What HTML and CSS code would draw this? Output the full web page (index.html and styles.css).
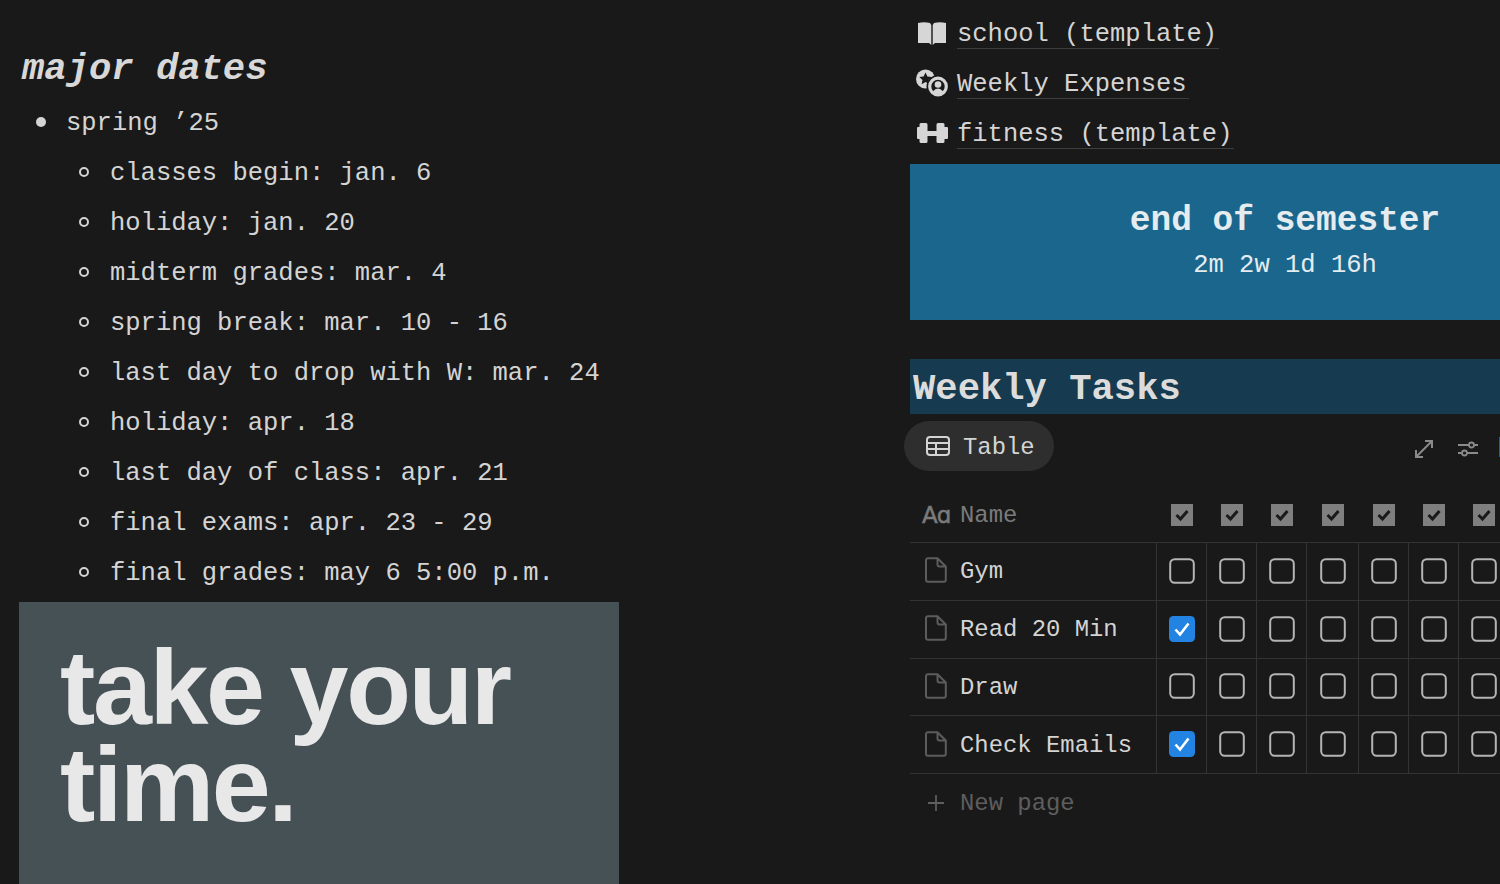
FILE: index.html
```html
<!DOCTYPE html>
<html lang="en">
<head>
<meta charset="utf-8">
<title>Dashboard</title>
<link rel="stylesheet" href="styles.css">
</head>
<body>
<svg width="0" height="0" class="defs">
  <symbol id="doc" viewBox="0 0 22 26"><path d="M3 1.200h9.500L20.800 9.500V22.800a2 2 0 0 1-2 2H3a2 2 0 0 1-2-2V3.200a2 2 0 0 1 2-2Z M12.500 1.200V7.500a2 2 0 0 0 2 2h6.300" fill="none" stroke="currentColor" stroke-width="2"/></symbol>
  <symbol id="box" viewBox="0 0 26 26"><rect x="1.200" y="1.200" width="23.600" height="23.600" rx="4.500" fill="none" stroke="currentColor" stroke-width="2"/></symbol>
  <symbol id="on" viewBox="0 0 26 26"><rect width="26" height="26" rx="4.500" fill="#2383e2"/><path d="M6.500 13.500l4.500 5 8.500-11" fill="none" stroke="#fff" stroke-width="2.600"/></symbol>
  <symbol id="hd" viewBox="0 0 22 22"><rect width="22" height="22" fill="#7f7f7f"/><path d="M5.500 11l4 4 7-8" fill="none" stroke="#1a1a1a" stroke-width="3"/></symbol>
</svg>
<main class="page">
  <section class="left">
    <h2 class="major">major dates</h2>
    <ul class="l1">
      <li>spring ’25
        <ul class="l2">
          <li>classes begin: jan. 6</li>
          <li>holiday: jan. 20</li>
          <li>midterm grades: mar. 4</li>
          <li>spring break: mar. 10 - 16</li>
          <li>last day to drop with W: mar. 24</li>
          <li>holiday: apr. 18</li>
          <li>last day of class: apr. 21</li>
          <li>final exams: apr. 23 - 29</li>
          <li>final grades: may 6 5:00 p.m.</li>
        </ul>
      </li>
    </ul>
    <div class="poster">take your time.</div>
  </section>
  <section class="right">
    <div class="links">
      <div class="link">
        <svg class="ico" viewBox="0 0 32 28"><path fill="#d6d6d6" d="M2 4Q8 2.500 14 4L15.300 6V26L13 24H2ZM30 4Q24 2.500 18 4L16.700 6V26L19 24H30Z"/></svg>
        <span class="ltext">school (template)</span>
      </div>
      <div class="link">
        <svg class="ico" viewBox="0 0 32 28"><circle cx="9.500" cy="10" r="9.500" fill="#d6d6d6"/><path fill="#191919" d="M9.500 3.500l1.900 4 4.300.5-3.200 3 .9 4.300-3.900-2.200-3.900 2.200.9-4.300-3.200-3 4.300-.5Z"/><circle cx="22" cy="17.500" r="11.500" fill="#191919"/><circle cx="22" cy="17.500" r="8.300" fill="none" stroke="#d6d6d6" stroke-width="3.200"/><circle cx="22" cy="15.500" r="3.300" fill="#d6d6d6"/><path fill="#d6d6d6" d="M16.800 22.500q5.200-6 10.400 0l-2 2.200h-6.400Z"/></svg>
        <span class="ltext">Weekly Expenses</span>
      </div>
      <div class="link">
        <svg class="ico" viewBox="0 0 32 28"><path fill="#d6d6d6" d="M5 4h5a1.500 1.500 0 0 1 1.500 1.500V12h9V5.500A1.500 1.500 0 0 1 22 4h5a1.500 1.500 0 0 1 1.500 1.500V8H31a1 1 0 0 1 1 1v10a1 1 0 0 1-1 1h-2.500v2.500A1.500 1.500 0 0 1 27 24h-5a1.500 1.500 0 0 1-1.500-1.500V17h-9v5.500A1.500 1.500 0 0 1 10 24H5a1.500 1.500 0 0 1-1.500-1.500V20H2a1 1 0 0 1-1-1V9a1 1 0 0 1 1-1h1.500V5.500A1.500 1.500 0 0 1 5 4Z"/></svg>
        <span class="ltext wide">fitness (template)</span>
      </div>
    </div>
    <div class="banner">
      <div class="bt">end of semester</div>
      <div class="bs">2m 2w 1d 16h</div>
    </div>
    <h2 class="weekly">Weekly Tasks</h2>
    <div class="toolbar">
      <div class="tab">
        <svg class="tabico" viewBox="0 0 24 20"><rect x="1" y="1" width="22" height="18" rx="3" fill="none" stroke="currentColor" stroke-width="2"/><path d="M1 7h22M1 13h22M10 7v12" stroke="currentColor" stroke-width="2"/></svg>
        <span>Table</span>
      </div>
      <div class="tools">
        <svg class="tool" viewBox="0 0 20 20"><path d="M2 18 18 2M11 2h7v7M2 11v7h7" fill="none" stroke="#8a8a8a" stroke-width="2"/></svg>
        <svg class="tool" viewBox="0 0 20 20"><path d="M0 6h11M16 6h4M0 14h4M9 14h11" fill="none" stroke="#8a8a8a" stroke-width="1.800"/><circle cx="13.500" cy="6" r="2.500" fill="none" stroke="#8a8a8a" stroke-width="1.800"/><circle cx="6.500" cy="14" r="2.500" fill="none" stroke="#8a8a8a" stroke-width="1.800"/></svg>
      </div>
      <div class="sliver"></div>
    </div>
    <div class="table">
      <div class="row head">
        <div class="name"><span class="aa">Aɑ</span><span>Name</span></div>
        <div class="c"><svg class="h"><use href="#hd"/></svg></div>
        <div class="c"><svg class="h"><use href="#hd"/></svg></div>
        <div class="c"><svg class="h"><use href="#hd"/></svg></div>
        <div class="c"><svg class="h"><use href="#hd"/></svg></div>
        <div class="c"><svg class="h"><use href="#hd"/></svg></div>
        <div class="c"><svg class="h"><use href="#hd"/></svg></div>
        <div class="c"><svg class="h"><use href="#hd"/></svg></div>
      </div>
      <div class="row">
        <div class="name"><svg class="doc"><use href="#doc"/></svg><span>Gym</span></div>
        <div class="c"><svg class="b"><use href="#box"/></svg></div>
        <div class="c"><svg class="b"><use href="#box"/></svg></div>
        <div class="c"><svg class="b"><use href="#box"/></svg></div>
        <div class="c"><svg class="b"><use href="#box"/></svg></div>
        <div class="c"><svg class="b"><use href="#box"/></svg></div>
        <div class="c"><svg class="b"><use href="#box"/></svg></div>
        <div class="c"><svg class="b"><use href="#box"/></svg></div>
      </div>
      <div class="row">
        <div class="name"><svg class="doc"><use href="#doc"/></svg><span>Read 20 Min</span></div>
        <div class="c"><svg class="b"><use href="#on"/></svg></div>
        <div class="c"><svg class="b"><use href="#box"/></svg></div>
        <div class="c"><svg class="b"><use href="#box"/></svg></div>
        <div class="c"><svg class="b"><use href="#box"/></svg></div>
        <div class="c"><svg class="b"><use href="#box"/></svg></div>
        <div class="c"><svg class="b"><use href="#box"/></svg></div>
        <div class="c"><svg class="b"><use href="#box"/></svg></div>
      </div>
      <div class="row">
        <div class="name"><svg class="doc"><use href="#doc"/></svg><span>Draw</span></div>
        <div class="c"><svg class="b"><use href="#box"/></svg></div>
        <div class="c"><svg class="b"><use href="#box"/></svg></div>
        <div class="c"><svg class="b"><use href="#box"/></svg></div>
        <div class="c"><svg class="b"><use href="#box"/></svg></div>
        <div class="c"><svg class="b"><use href="#box"/></svg></div>
        <div class="c"><svg class="b"><use href="#box"/></svg></div>
        <div class="c"><svg class="b"><use href="#box"/></svg></div>
      </div>
      <div class="row">
        <div class="name"><svg class="doc"><use href="#doc"/></svg><span>Check Emails</span></div>
        <div class="c"><svg class="b"><use href="#on"/></svg></div>
        <div class="c"><svg class="b"><use href="#box"/></svg></div>
        <div class="c"><svg class="b"><use href="#box"/></svg></div>
        <div class="c"><svg class="b"><use href="#box"/></svg></div>
        <div class="c"><svg class="b"><use href="#box"/></svg></div>
        <div class="c"><svg class="b"><use href="#box"/></svg></div>
        <div class="c"><svg class="b"><use href="#box"/></svg></div>
      </div>
    </div>
    <div class="newpage">
      <svg class="plus" viewBox="0 0 18 18"><path d="M9 0v18M0 9h18" stroke="currentColor" stroke-width="2"/></svg>
      <span>New page</span>
    </div>
  </section>
</main>
</body>
</html>
```
FILE: styles.css
```css
*, *::before, *::after { box-sizing: border-box; }
html, body { margin: 0; height: 884px; overflow: hidden; background: #191919; }
body { font-family: "Liberation Mono", "DejaVu Sans Mono", monospace; color: #d4d4d4; font-size: 25.5px; }
.defs { display: block; height: 0; }
.page { display: flex; width: 1500px; height: 884px; overflow: hidden; }

.left { width: 910px; flex: none; padding: 44px 0 0 19px; }
.major { margin: 0 0 0 3px; font-size: 37.200px; line-height: 50px; font-weight: 700; font-style: italic; color: #d8d8d8; }
.l1, .l2 { list-style: none; margin: 0; padding: 0; }
.l1 { margin-top: 5px; }
.l1 > li, .l2 > li { line-height: 50px; height: 50px; position: relative; white-space: nowrap; }
.l1 > li { padding-left: 47px; height: auto; }
.l2 > li { padding-left: 44px; }
.l1 > li::before { content: ""; position: absolute; left: 17px; top: 18px; width: 10px; height: 10px; border-radius: 50%; background: #d4d4d4; }
.l2 > li::before { content: ""; position: absolute; left: 13px; top: 18px; width: 10px; height: 10px; border-radius: 50%; border: 2px solid #d4d4d4; }
.poster { margin-top: 3px; width: 600px; height: 300px; background: #465156; color: #e8e8e8; padding: 37px 60px 0 41px; font-family: "Liberation Sans", Arial, sans-serif; font-weight: 700; font-size: 106px; line-height: 97px; letter-spacing: -2.400px; }

.right { flex: 1; min-width: 0; }
.links { display: flex; flex-direction: column; padding-top: 8px; }
.link { height: 50px; display: flex; align-items: flex-start; }
.ico { width: 32px; height: 28px; margin: 11px 9px 0 6px; flex: none; }
.ltext { height: 41px; line-height: 54px; border-bottom: 1px solid #3d3d3d; padding-right: 2px; color: #d4d4d4; }
.banner { height: 156px; margin-top: 6px; width: 750px; background: #1b668c; display: flex; flex-direction: column; align-items: center; padding-top: 34px; color: #e4ecf0; }
.bt { font-size: 34.500px; font-weight: 700; line-height: 46px; }
.bs { line-height: 44px; }
.weekly { margin: 39px 0 0; height: 55px; background: #163a4f; padding-left: 3px; font-size: 37.200px; line-height: 60px; font-weight: 700; color: #dcdcdc; }
.toolbar { height: 73px; display: flex; position: relative; padding-top: 7px; font-size: 23.900px; }
.tab { width: 150px; height: 50px; margin-left: -6px; border-radius: 25px; background: #2e2e2e; display: flex; align-items: center; padding: 3px 0 0 22px; color: #d4d4d4; }
.tabico { width: 24px; height: 20px; margin: -3px 13px 0 0; }
.tools { margin-left: auto; display: flex; gap: 24px; padding: 18px 22px 0 0; }
.tool { width: 20px; height: 20px; }
.sliver { position: absolute; right: 0; top: 23px; width: 1px; height: 20px; background: #1b668c; }
.table { border-bottom: 1px solid #333; font-size: 23.900px; }
.row { display: grid; grid-template-columns: 246px 50px 50px 50px 52px 50px 50px 50px; width: 598px; height: 57.750px; border-top: 1px solid #333; }
.row.head { height: 55px; border-top: 0; }
.name { display: flex; align-items: center; padding: 1px 0 0 15px; color: #d4d4d4; }
.head .name { color: #7b7b7b; padding-left: 12px; }
.aa { font-family: "DejaVu Sans", sans-serif; font-size: 23px; width: 38px; letter-spacing: -1px; -webkit-text-stroke: 0.5px #7b7b7b; }
.doc { width: 22px; height: 26px; margin: -3px 13px 0 0; color: #5c5c5c; flex: none; }
.c { display: flex; align-items: center; justify-content: center; border-left: 1px solid #333; color: #b5b5b5; padding: 0 0 1px 1px; }
.head .c { border-left: 0; padding: 1px 0 0 2px; }
.b { width: 26px; height: 26px; }
.h { width: 22px; height: 22px; }
.newpage { display: flex; align-items: center; height: 58px; padding-left: 18px; color: #5e5e5e; font-size: 23.900px; }
.plus { width: 16px; height: 16px; margin-right: 16px; }
```
